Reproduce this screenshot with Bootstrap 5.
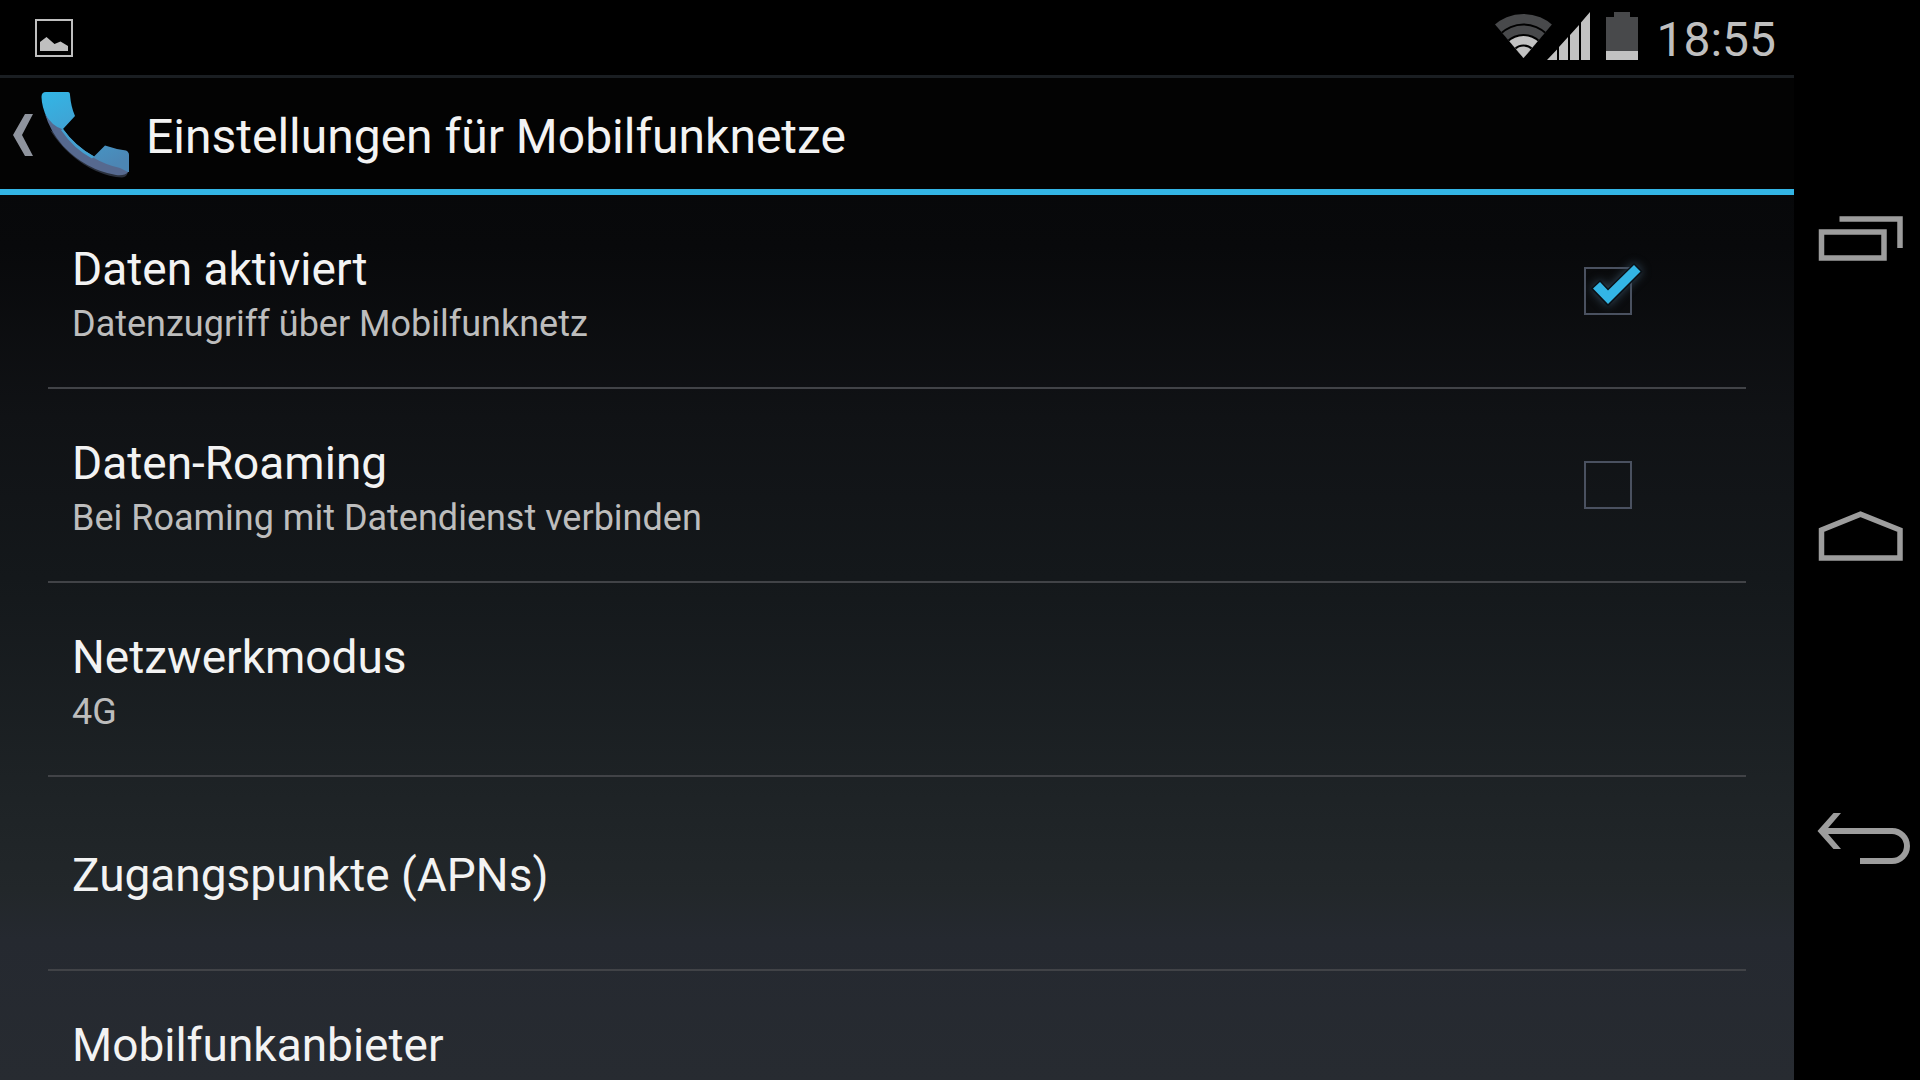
<!DOCTYPE html>
<html lang="de">
<head>
<meta charset="utf-8">
<meta name="viewport" content="width=device-width, initial-scale=1">
<title>Einstellungen für Mobilfunknetze</title>
<link rel="stylesheet" href="https://cdn.jsdelivr.net/npm/bootstrap@5.3.0/dist/css/bootstrap.min.css">
<style>
  body { background: #000; color: #f3f3f3; font-family: Roboto, sans-serif; }
  svg { display: block; flex: none; }
  .status-bar { height: 75px; padding: 0 18px 0 35px; color: #bfbfbf; }
  .status-icons { gap: 16px; padding-bottom: 3px; }
  .clock { font-size: 48px; line-height: 56px; padding: 4px 0 0 18px; }
  .screen { background: linear-gradient(#050607 0, #08090b 17%, #101215 34%, #14181b 50%, #1e2326 72%, #22272a 81%, #252930 86%, #272b31 100%); }
  .action-bar { height: 120px; border-top: 3px solid #1a1e22; border-bottom: 6px solid #33b5e5; background: #030303; }
  .action-bar h1 { font-size: 48px; line-height: 56px; padding: 6px 0 0 10px; font-weight: 400; }
  .settings { padding: 0 48px; }
  .setting { min-height: 194px; padding: 4px 114px 0 24px; border-bottom: 2px solid #414347; color: inherit; text-decoration: none; }
  .setting-title { font-size: 46px; line-height: 60px; }
  .setting-note { font-size: 36px; line-height: 50px; color: #bdbdbd; }
  .two-line { height: 108px; }
  .tick { width: 48px; height: 52px; }
  .tick input { appearance: none; width: 48px; height: 48px; margin: 0; border: 2px solid #4a5160; background: transparent; display: block; }
  .tick svg { display: none; left: -12px; top: -14px; filter: drop-shadow(0 0 5px #34495a); pointer-events: none; }
  .tick input:checked + svg { display: block; }
  .nav-keys { width: 126px; padding: 90px 0; }
  .nav-keys button { background: none; border: 0; padding: 0; color: #9d9d9d; }
</style>
<script src="https://cdn.jsdelivr.net/npm/bootstrap@5.3.0/dist/js/bootstrap.bundle.min.js"></script>
</head>
<body>
<div class="d-flex vh-100 overflow-hidden">
  <div class="d-flex flex-column flex-grow-1 overflow-hidden">
    <header class="status-bar d-flex align-items-center justify-content-between flex-shrink-0">
      <svg width="38" height="38" viewBox="0 0 38 38" aria-label="Screenshot"><path d="M1 1H37V37H1Z" fill="none" stroke="#bfbfbf" stroke-width="2"/><path d="M5 32V23L11.500 18L19.500 25L25.500 22.500L33 27V32Z" fill="#bfbfbf"/></svg>
      <div class="d-flex align-items-center">
        <div class="status-icons d-flex">
          <svg width="96" height="48" viewBox="1494 12 96 48" aria-label="WLAN und Mobilfunk">
            <defs><clipPath id="fan"><path d="M1523.500 58L1493 22V0H1554V22Z"/></clipPath></defs>
            <g clip-path="url(#fan)">
              <circle cx="1523.500" cy="58" r="44" fill="#48494b"/>
              <circle cx="1523.500" cy="58" r="34.500" fill="#000"/>
              <circle cx="1523.500" cy="58" r="32.500" fill="#48494b"/>
              <circle cx="1523.500" cy="58" r="24" fill="#000"/>
              <circle cx="1523.500" cy="58" r="22" fill="#c2c2c2"/>
              <circle cx="1523.500" cy="58" r="13.500" fill="#000"/>
              <circle cx="1523.500" cy="58" r="11.500" fill="#c2c2c2"/>
            </g>
            <path d="M1547 60L1557 49.500V60ZM1559 60V47L1568 37V60ZM1570 60V35L1579 25V60ZM1581 60V22.500L1590 12V60Z" fill="#c2c2c2"/>
          </svg>
          <svg width="32" height="48" viewBox="0 0 32 48" aria-label="Akku"><path d="M8 0H24V5H32V39H0V5H8Z" fill="#48494b"/><path d="M0 39H32V48H0Z" fill="#c2c2c2"/></svg>
        </div>
        <time class="clock">18:55</time>
      </div>
    </header>
    <main class="screen flex-grow-1 overflow-hidden">
      <div class="action-bar d-flex align-items-center">
        <a href="#" aria-label="Zurück">
          <svg width="136" height="111" viewBox="0 78 136 111">
            <defs>
              <linearGradient id="phone" x1="50" y1="92" x2="90" y2="176" gradientUnits="userSpaceOnUse"><stop offset="0" stop-color="#33b5e5"/><stop offset=".4" stop-color="#3fa3d4"/><stop offset="1" stop-color="#4c86b4"/></linearGradient>
            </defs>
            <path d="M25 114H33L22 135L33 156H25L13 135Z" fill="#8f949e"/>
            <path d="M50 130Q68 158 96 171Q110 177 122 177.500Q127 177 128 172L112 167Z" fill="#2a303c"/>
            <path d="M46 92H68Q70 92 70 95Q71 107 75 116L63 129Q75 146 94 156.500L105 145.500Q115 149 126 150.500Q129 152 129 155V172H122Q88 172 63 142Q42 117 41.500 97Q41.500 92 46 92Z" fill="url(#phone)"/>
            <path d="M45 114Q52 126 62 129Q75 148 94 158Q106 165 120 168L128 172Q125 176 116 175Q86 170 63 146Q50 131 45 114Z" fill="#56698f"/>
            <path d="M63 129Q75 146 94 156.500L92 158.500Q74 149 61 130Z" fill="#43a0d0"/>
          </svg>
        </a>
        <h1 class="mb-0 text-nowrap">Einstellungen für Mobilfunknetze</h1>
      </div>
      <div class="settings">
        <label class="setting d-flex align-items-center justify-content-between" for="data">
          <span class="two-line"><span class="setting-title d-block">Daten aktiviert</span><span class="setting-note d-block">Datenzugriff über Mobilfunknetz</span></span>
          <span class="tick position-relative"><input type="checkbox" id="data" checked>
            <svg class="position-absolute" width="80" height="72" viewBox="1572 253 80 72"><path d="M1593 288.500L1600 282L1608 290.500L1634 265L1640.500 271.500L1608 304Z" fill="#33b5e5" stroke="#0a1016" stroke-width="3" paint-order="stroke"/></svg>
          </span>
        </label>
        <label class="setting d-flex align-items-center justify-content-between" for="roaming">
          <span class="two-line"><span class="setting-title d-block">Daten-Roaming</span><span class="setting-note d-block">Bei Roaming mit Datendienst verbinden</span></span>
          <span class="tick position-relative"><input type="checkbox" id="roaming">
            <svg class="position-absolute" width="80" height="72" viewBox="1572 253 80 72"><path d="M1593 288.500L1600 282L1608 290.500L1634 265L1640.500 271.500L1608 304Z" fill="#33b5e5" stroke="#0a1016" stroke-width="3" paint-order="stroke"/></svg>
          </span>
        </label>
        <a class="setting d-flex align-items-center" href="#"><span class="two-line"><span class="setting-title d-block">Netzwerkmodus</span><span class="setting-note d-block">4G</span></span></a>
        <a class="setting d-flex align-items-center" href="#"><span class="setting-title">Zugangspunkte (APNs)</span></a>
        <a class="setting d-flex align-items-center" href="#"><span class="two-line"><span class="setting-title d-block">Mobilfunkanbieter</span></span></a>
      </div>
    </main>
  </div>
  <nav class="nav-keys d-flex flex-column flex-shrink-0" aria-label="Systemtasten">
    <button type="button" class="flex-fill" aria-label="Letzte Apps"><svg width="126" height="100" viewBox="0 0 126 100" fill="none" stroke="currentColor" stroke-width="5.500"><path d="M27.500 42H90V68H27.500ZM45.500 29H106V58"/></svg></button>
    <button type="button" class="flex-fill" aria-label="Startseite"><svg width="126" height="100" viewBox="0 0 126 100" fill="none" stroke="currentColor" stroke-width="5.500"><path d="M27.500 40L66.500 24.200L106 40V68H27.500Z"/></svg></button>
    <button type="button" class="flex-fill" aria-label="Zurück"><svg width="126" height="100" viewBox="0 0 126 100" fill="none" stroke="currentColor" stroke-width="6"><path d="M30 41H98a15 15 0 0 1 0 30H66"/><path d="M39.500 23H47L31.500 41L47 59H39.500L23.500 41Z" fill="currentColor" stroke="none"/></svg></button>
  </nav>
</div>
</body>
</html>
